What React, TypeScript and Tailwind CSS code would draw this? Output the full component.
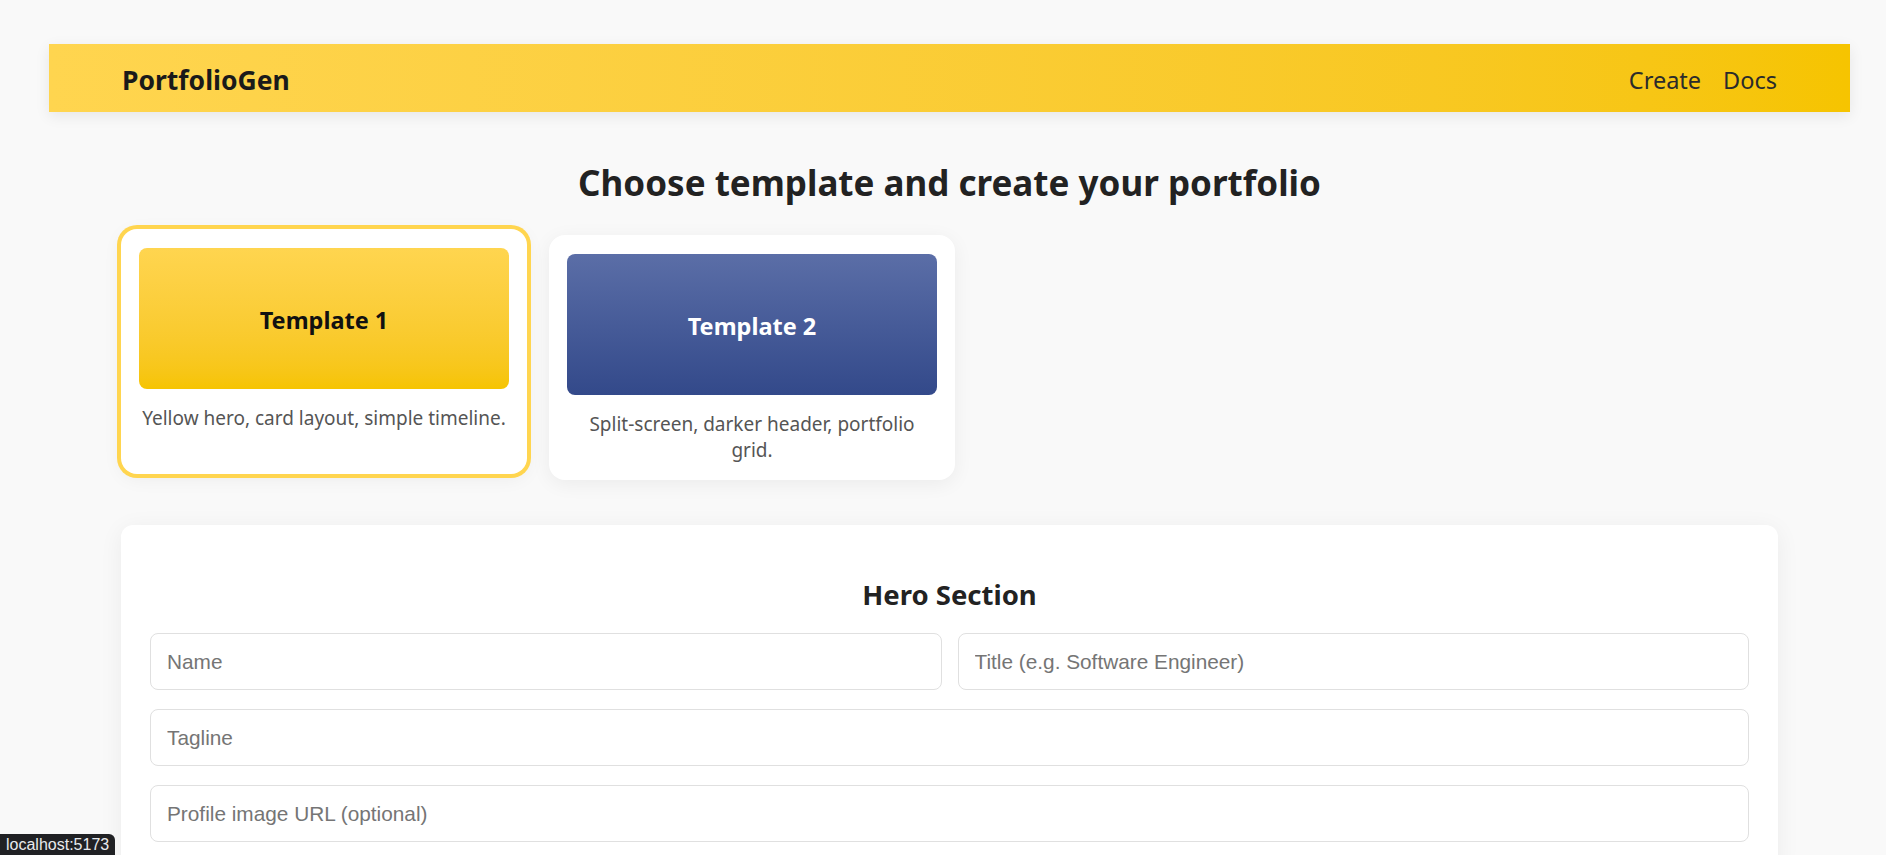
import React, { useState } from 'react';

const templates = [
  {
    id: 1,
    name: 'Template 1',
    desc: 'Yellow hero, card layout, simple timeline.',
    preview: 'bg-gradient-to-b from-[#ffd54f] to-[#f6c400] text-[#111]',
  },
  {
    id: 2,
    name: 'Template 2',
    desc: 'Split-screen, darker header, portfolio grid.',
    preview: 'bg-gradient-to-b from-[#5b6ea7] to-[#33498a] text-white',
  },
];

const inputClass =
  'h-[57px] rounded-lg border border-[#e0e0e0] bg-white px-4 text-[20.8px] text-[#222] placeholder:text-[#757575] outline-none focus:border-[#f6c400]';

const App: React.FC = () => {
  const [selected, setSelected] = useState(1);

  return (
    <div className="min-h-screen bg-[#f9f9f9] pl-[49px] pr-[36px] pt-[44px] font-['Noto_Sans',sans-serif] text-[#222]">
      {/* Top bar */}
      <header className="flex items-center justify-between h-[68px] px-[73px] pt-[6px] bg-gradient-to-r from-[#ffd54f] to-[#f6c400] shadow-[0_4px_14px_rgba(0,0,0,0.08)]">
        <div className="text-[26.5px] font-bold text-[#1a1a1a]">PortfolioGen</div>
        <nav className="flex gap-[22px] text-[23.5px] text-[#2b2b2b]">
          <a className="cursor-pointer">Create</a>
          <a className="cursor-pointer">Docs</a>
        </nav>
      </header>

      <main className="px-[72px]">
        <h1 className="mt-[50px] text-center text-[35px] leading-[42px] font-bold text-[#222]">
          Choose template and create your portfolio
        </h1>

        {/* Template picker */}
        <div className="flex gap-[22px] mt-[31px]">
          {templates.map((t) => (
            <div
              key={t.id}
              onClick={() => setSelected(t.id)}
              className={`w-[406px] cursor-pointer rounded-2xl bg-white p-[18px] pt-[19px] pb-[17px] text-center shadow-[0_4px_20px_rgba(0,0,0,0.06)] ${
                selected === t.id ? 'ring-4 ring-[#ffd54f] -translate-y-[6px]' : ''
              }`}
            >
              <div className={`h-[141px] pt-[4px] rounded-lg flex items-center justify-center text-[23.5px] font-bold ${t.preview}`}>
                {t.name}
              </div>
              <p className="mt-4 text-[19px] leading-[26px] text-[#555]">{t.desc}</p>
            </div>
          ))}
        </div>

        {/* Form */}
        <section className="mt-[45px] rounded-xl bg-white px-[29px] pt-[54px] pb-8 shadow-[0_4px_24px_rgba(0,0,0,0.06)]">
          <h2 className="text-center text-[27.5px] leading-[31px] font-bold text-[#222]">Hero Section</h2>
          <div className="mt-[23px] grid grid-cols-2 gap-x-4 gap-y-[19px] font-['Liberation_Sans',Arial,sans-serif]">
            <input placeholder="Name" className={inputClass} />
            <input placeholder="Title (e.g. Software Engineer)" className={inputClass} />
            <input placeholder="Tagline" className={`col-span-2 ${inputClass}`} />
            <input placeholder="Profile image URL (optional)" className={`col-span-2 ${inputClass}`} />
          </div>
        </section>
      </main>

      {/* browser status bubble */}
      <div className="fixed left-0 bottom-0 rounded-tr-md bg-[#202124] px-[6px] py-[1px] text-[16px] leading-[19px] text-[#e8eaed] font-['Liberation_Sans',sans-serif]">
        localhost:5173
      </div>
    </div>
  );
};

export default App;
